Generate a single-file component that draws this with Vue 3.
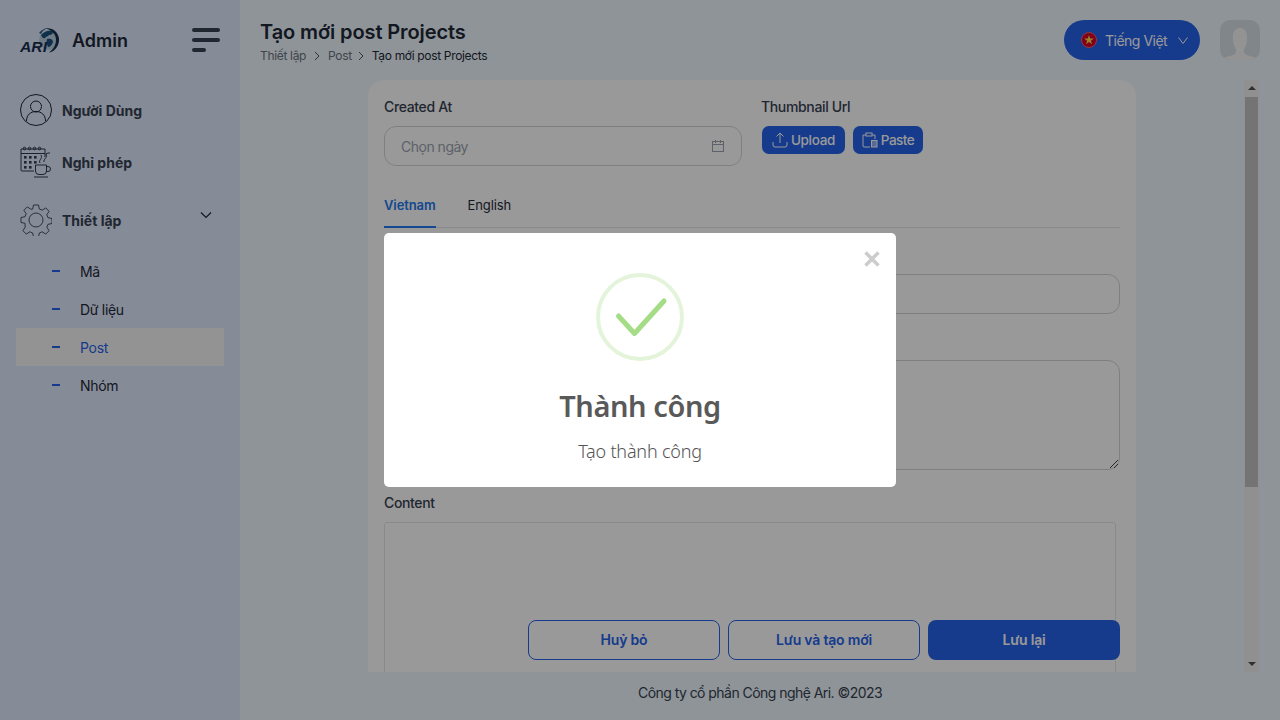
<template>
  <div class="layout">
    <aside class="sidebar">
      <div class="brand">
        <svg class="logo" width="40" height="28" viewBox="0 0 40 28">
          <circle cx="29" cy="14" r="10" fill="#b9cfe0" />
          <path d="M21 9c3-3 7-5 11-4 2 2 0 4-3 4-1 2-3 1-4 3-2 1-3-1-4-3zM27 13c3-1 6 0 6 3-1 3-3 5-5 5-1-3-2-5-1-8z" fill="#1c4f7c" />
          <path d="M26 2.500c6-1 12 3 13 10 .5 7-4 13-10 14 4-3 7-7 7-13 0-5-4-9-10-11z" fill="#16304f" />
          <path d="M19 7c2-3 6-5 9-5-3 1-6 3-7 6z" fill="#2d5f86" />
          <text x="0" y="25.500" textLength="27" lengthAdjust="spacingAndGlyphs" class="logo-text">ARI</text>
        </svg>
        <span class="brand-name">Admin</span>
        <div class="burger">
          <span></span>
          <span></span>
          <span class="short"></span>
        </div>
      </div>

      <nav class="nav">
        <a class="nav-item">
          <svg class="nav-icon" viewBox="0 0 32 32" fill="none" stroke="#1f2937" stroke-width="1">
            <circle cx="16" cy="16" r="15.500" />
            <circle cx="16" cy="12.500" r="5.500" />
            <path d="M6.500 27c0-6 4-9.500 9.500-9.500s9.500 3.500 9.500 9.500" />
          </svg>
          <span>Người Dùng</span>
        </a>
        <a class="nav-item">
          <svg class="nav-icon" viewBox="0 0 32 32" fill="none" stroke="#1f2937" stroke-width=".9">
            <path d="M14 25H2a1 1 0 0 1-1-1V3h24v8" />
            <path d="M1 7.500h24" />
            <circle cx="4.500" cy="2.500" r="1.300" /><circle cx="9.500" cy="2.500" r="1.300" />
            <circle cx="14.500" cy="2.500" r="1.300" /><circle cx="19.500" cy="2.500" r="1.300" />
            <g fill="#374151" stroke="none">
              <rect x="4" y="10" width="2.600" height="2.600" /><rect x="9" y="10" width="2.600" height="2.600" /><rect x="14" y="10" width="2.600" height="2.600" />
              <rect x="4" y="15" width="2.600" height="2.600" /><rect x="9" y="15" width="2.600" height="2.600" /><rect x="14" y="15" width="2.600" height="2.600" />
              <rect x="4" y="20" width="2.600" height="2.600" /><rect x="9" y="20" width="2.600" height="2.600" />
            </g>
            <path d="M15.500 19h11v6a3.500 3.500 0 0 1-3.500 3.500h-4a3.500 3.500 0 0 1-3.500-3.500z" />
            <path d="M26.500 20.500h1.500a2.500 2.500 0 0 1 0 5h-1.800M14 31h14" />
            <path d="M20 17c-2-3 3-4 1-8M24 16c-1-3 4-4 2-8 1-1 3-1 4-1" />
          </svg>
          <span>Nghỉ phép</span>
        </a>
        <a class="nav-item nav-parent">
          <svg class="nav-icon" viewBox="0 0 32 32" fill="none" stroke="#374151" stroke-width=".9">
            <path d="M13.500 1h5l.8 4 2.900 1.200 3.500-2.300 3.400 3.400-2.300 3.500 1.200 2.900 4 .8v5l-4 .8-1.200 2.900 2.300 3.500-3.400 3.400-3.500-2.300-2.900 1.200-.8 4h-5l-.8-4-2.900-1.200-3.500 2.300-3.400-3.400 2.300-3.500L5 19.300l-4-.8v-5l4-.8 1.200-2.900-2.300-3.500 3.400-3.400 3.500 2.300L12.700 5z" stroke-linejoin="round" />
            <circle cx="16" cy="16" r="7" />
          </svg>
          <span>Thiết lập</span>
          <svg class="nav-chevron" width="12" height="8" viewBox="0 0 12 8" fill="none" stroke="#1f2937" stroke-width="1.200">
            <path d="M1 1.500l5 5 5-5" />
          </svg>
        </a>
        <ul class="sub-menu">
          <li v-for="item in subItems" :key="item" class="sub-item" :class="{ active: item === 'Post' }">
            <i class="dash"></i>
            <span>{{ item }}</span>
          </li>
        </ul>
      </nav>
    </aside>

    <div class="main">
      <header class="topbar">
        <div class="heading">
          <h1>Tạo mới post Projects</h1>
          <div class="breadcrumb">
            <span class="muted">Thiết lập</span>
            <svg width="6" height="10" viewBox="0 0 6 10" fill="none" stroke="#4b5563"><path d="M1 1l4 4-4 4" /></svg>
            <span class="muted">Post</span>
            <svg class="tight" width="6" height="10" viewBox="0 0 6 10" fill="none" stroke="#4b5563"><path d="M1 1l4 4-4 4" /></svg>
            <span>Tạo mới post Projects</span>
          </div>
        </div>
        <div class="top-actions">
          <div class="lang">
            <svg width="16" height="16" viewBox="0 0 16 16">
              <circle cx="8" cy="8" r="7.500" fill="#d80027" stroke="#f0607a" />
              <path d="M8 3l1.200 3.500h3.700l-3 2.200 1.200 3.500L8 10l-3.100 2.200 1.200-3.500-3-2.200h3.700z" fill="#ffda44" />
            </svg>
            <span>Tiếng Việt</span>
            <svg class="lang-chevron" width="10" height="7" viewBox="0 0 10 7" fill="none" stroke="#fff" stroke-width="1">
              <path d="M.5 .5l4.500 6 4.500-6" />
            </svg>
          </div>
          <div class="avatar">
            <svg width="40" height="40" viewBox="0 0 40 40">
              <path d="M3 40v-1c3-3 9-3 12-5 2-2 1-5 0-7-2-3-2-7-2-11 0-5 3-8 7-8s7 3 7 8c0 4 0 8-2 11-1 2-2 5 0 7 3 2 9 2 12 5v1z" fill="#f5f5f5" />
            </svg>
          </div>
        </div>
      </header>

      <div class="body">
        <section class="card">
          <div class="row-top">
            <div class="field-date">
              <label>Created At</label>
              <div class="date-input">
                <span>Chọn ngày</span>
                <svg width="14" height="14" viewBox="0 0 14 14" fill="none" stroke="#9ca3af">
                  <rect x="1.500" y="2.500" width="11" height="10" />
                  <path d="M1.500 5.500h11M4.500 1v3M9.500 1v3" />
                </svg>
              </div>
            </div>
            <div class="field-thumb">
              <label>Thumbnail Url</label>
              <div class="thumb-btns">
                <button class="small-btn btn-upload">
                  <svg width="16" height="16" viewBox="0 0 16 16" fill="none" stroke="#fff">
                    <path d="M8 11V1.500M4.500 4.500L8 1l3.500 3.500M1 10v3a2 2 0 0 0 2 2h10a2 2 0 0 0 2-2v-3" />
                  </svg>
                  Upload
                </button>
                <button class="small-btn btn-paste">
                  <svg width="16" height="16" viewBox="0 0 16 16" fill="none" stroke="#fff">
                    <path d="M8 15H2a1 1 0 0 1-1-1V3h3M10 3h3v4" />
                    <rect x="4" y="1" width="6" height="3" />
                    <rect x="9.500" y="8.500" width="5.500" height="6.500" fill="#fff" fill-opacity=".5" />
                  </svg>
                  Paste
                </button>
              </div>
            </div>
          </div>

          <div class="tabs">
            <span class="tab active">Vietnam</span>
            <span class="tab">English</span>
          </div>

          <label class="field-label">Title</label>
          <div class="text-input"></div>
          <label class="field-label">Description</label>
          <div class="text-area">
            <svg class="resizer" width="9" height="9" viewBox="0 0 9 9" stroke="#444">
              <path d="M1 9l8-8M5 9l4-4" />
            </svg>
          </div>
          <label class="field-label content-label">Content</label>
          <div class="editor"></div>

          <div class="actions">
            <button class="btn outline">Huỷ bỏ</button>
            <button class="btn outline">Lưu và tạo mới</button>
            <button class="btn solid">Lưu lại</button>
          </div>
        </section>

        <div class="scrollbar">
          <i class="arrow up"></i>
          <div class="thumb"></div>
          <i class="arrow down"></i>
        </div>
      </div>

      <footer class="footer">Công ty cổ phần Công nghệ Ari. ©2023</footer>
    </div>

    <div class="overlay">
      <div class="modal">
        <svg class="close" width="16" height="16" viewBox="0 0 16 16" stroke="#ccc" stroke-width="3.500">
          <path d="M1.500 1.500l13 13M14.500 1.500l-13 13" />
        </svg>
        <svg class="success" width="88" height="88" viewBox="0 0 88 88" fill="none">
          <circle cx="44" cy="44" r="42" stroke="#a5dc86" stroke-opacity=".3" stroke-width="4" />
          <path d="M22.500 43l16 17.500L68 28" stroke="#a5dc86" stroke-width="5" stroke-linecap="round" stroke-linejoin="round" />
        </svg>
        <h2>Thành công</h2>
        <p>Tạo thành công</p>
      </div>
    </div>
  </div>
</template>

<script setup>
const subItems = ['Mã', 'Dữ liệu', 'Post', 'Nhóm']
</script>

<style>
html,
body {
  margin: 0;
  overflow: hidden;
}
</style>

<style scoped>
.layout {
  display: flex;
  height: 720px;
  font-family: Inter, "Noto Sans", sans-serif;
  color: #1f2937;
  background: #eef7fd;
}

.sidebar {
  width: 240px;
  flex: none;
  background: #dee8fc;
}

.brand {
  display: flex;
  align-items: center;
  height: 80px;
  padding: 0 20px;
  box-sizing: border-box;
}

.logo {
  flex: none;
}

.logo-text {
  font: italic 700 15px "Liberation Sans", sans-serif;
  fill: #16304f;
}

.brand-name {
  margin-left: 12px;
  font-size: 18px;
  font-weight: 600;
}

.burger {
  display: flex;
  flex-direction: column;
  gap: 6px;
  width: 28px;
  margin-left: auto;
}

.burger span {
  height: 4px;
  border-radius: 2px;
  background: #374151;
}

.burger .short {
  width: 14px;
}

.nav {
  padding-top: 4px;
}

.nav-item {
  display: flex;
  align-items: center;
  gap: 10px;
  height: 52px;
  padding: 0 28px 0 20px;
  font-size: 14px;
  font-weight: 700;
  color: #374151;
}

.nav-parent {
  margin-top: 6px;
}

.nav-icon {
  width: 32px;
  height: 32px;
  flex: none;
}

.nav-chevron {
  margin: 0 0 10px auto;
}

.sub-menu {
  list-style: none;
  margin: 6px 0 0;
  padding: 0 16px;
}

.sub-item {
  display: flex;
  align-items: center;
  height: 38px;
  padding-left: 36px;
  font-size: 14px;
  letter-spacing: -0.3px;
}

.sub-item.active {
  background: #f6f6f6;
  color: #2563eb;
}

.dash {
  width: 8px;
  height: 2px;
  margin-right: 20px;
  background: #2563eb;
}

.main {
  flex: 1;
  min-width: 0;
  display: flex;
  flex-direction: column;
}

.topbar {
  display: flex;
  align-items: center;
  justify-content: space-between;
  height: 80px;
  padding: 0 20px;
  box-sizing: border-box;
  flex: none;
}

.heading {
  padding-top: 4px;
}

h1 {
  margin: 0;
  font-size: 20px;
  line-height: 24px;
  font-weight: 600;
  letter-spacing: -0.1px;
}

.breadcrumb {
  display: flex;
  align-items: center;
  gap: 8px;
  margin-top: 4px;
  font-size: 12px;
  line-height: 16px;
  letter-spacing: -0.33px;
}

.breadcrumb .tight {
  margin-left: -2px;
}

.muted {
  color: #6b7280;
}

.top-actions {
  display: flex;
  align-items: center;
  gap: 20px;
}

.lang {
  display: flex;
  align-items: center;
  gap: 8px;
  width: 136px;
  height: 40px;
  padding-left: 17px;
  box-sizing: border-box;
  border-radius: 20px;
  background: #2563eb;
  color: #fff;
  font-size: 14px;
  letter-spacing: -0.5px;
}

.lang-chevron {
  margin-left: 3px;
}

.avatar {
  width: 40px;
  height: 40px;
  border-radius: 10px;
  overflow: hidden;
  background: #d8dfe6;
}

.body {
  flex: 1;
  min-height: 0;
  display: flex;
  padding-left: 128px;
  gap: 108px;
}

.card {
  width: 768px;
  flex: none;
  padding: 16px;
  box-sizing: border-box;
  border-radius: 16px 16px 0 0;
  background: #fff;
  overflow: hidden;
  position: relative;
}

.row-top {
  display: flex;
  gap: 19px;
}

label {
  display: block;
  font-size: 14px;
  line-height: 22px;
  font-weight: 500;
  letter-spacing: -0.35px;
  color: #374151;
}

.field-date label,
.field-thumb label {
  margin-bottom: 8px;
}

.date-input {
  display: flex;
  align-items: center;
  justify-content: space-between;
  width: 358px;
  height: 40px;
  padding: 0 16px;
  box-sizing: border-box;
  border: 1px solid #d1d5db;
  border-radius: 12px;
  font-size: 14px;
  letter-spacing: -0.5px;
  color: #9ca3af;
}

.thumb-btns {
  display: flex;
  gap: 8px;
  padding-left: 1px;
}

.small-btn {
  display: flex;
  align-items: center;
  justify-content: center;
  gap: 3px;
  height: 28px;
  padding: 0;
  border: 0;
  border-radius: 7px;
  background: #2563eb;
  color: #fff;
  font: 500 13.500px Inter, sans-serif;
  letter-spacing: -0.3px;
}

.btn-upload {
  width: 83px;
}

.btn-paste {
  width: 70px;
  letter-spacing: -0.5px;
}

.tabs {
  display: flex;
  gap: 32px;
  height: 44px;
  margin-top: 17px;
  border-bottom: 1px solid #e5e7eb;
  font-size: 13px;
}

.tab {
  height: 43px;
  line-height: 44px;
  letter-spacing: -0.1px;
}

.tab.active {
  color: #2279f0;
  font-weight: 600;
  border-bottom: 2px solid #2279f0;
}

.field-label {
  margin-top: 12px;
  margin-bottom: 12px;
}

.text-input {
  height: 40px;
  box-sizing: border-box;
  border: 1px solid #d1d5db;
  border-radius: 12px;
}

.text-area {
  position: relative;
  height: 110px;
  box-sizing: border-box;
  border: 1px solid #d1d5db;
  border-radius: 12px;
}

.resizer {
  position: absolute;
  right: 1px;
  bottom: 1px;
}

.content-label {
  margin-top: 22px;
  margin-bottom: 8px;
}

.editor {
  width: 732px;
  height: 160px;
  box-sizing: border-box;
  border: 1px solid #e5e7eb;
  border-radius: 3px;
}

.actions {
  position: absolute;
  right: 16px;
  top: 540px;
  display: flex;
  gap: 8px;
}

.btn {
  width: 192px;
  height: 40px;
  padding: 0 0 2px;
  box-sizing: border-box;
  border-radius: 8px;
  font: 600 14px Inter, sans-serif;
  letter-spacing: -0.2px;
}

.btn.outline {
  border: 1px solid #2563eb;
  background: #fff;
  color: #2563eb;
}

.btn.solid {
  border: 0;
  background: #2563eb;
  color: #fff;
}

.scrollbar {
  width: 15px;
  flex: none;
  display: flex;
  flex-direction: column;
  align-items: center;
  background: #f1f1f1;
}

.thumb {
  width: 13px;
  height: 390px;
  background: #c1c1c1;
}

.arrow {
  width: 0;
  height: 0;
  border-left: 4px solid transparent;
  border-right: 4px solid transparent;
}

.arrow.up {
  margin: 6px 0 7px;
  border-bottom: 4px solid #505050;
}

.arrow.down {
  margin-top: auto;
  margin-bottom: 6px;
  border-top: 4px solid #505050;
}

.footer {
  height: 48px;
  flex: none;
  line-height: 41px;
  text-align: center;
  font-size: 14px;
  letter-spacing: -0.55px;
  color: #374151;
}

.overlay {
  position: fixed;
  inset: 0;
  display: flex;
  align-items: center;
  justify-content: center;
  background: rgba(0, 0, 0, 0.4);
  font-family: "Noto Sans", sans-serif;
}

.modal {
  position: relative;
  display: flex;
  flex-direction: column;
  align-items: center;
  width: 512px;
  height: 254px;
  padding-top: 40px;
  box-sizing: border-box;
  border-radius: 5px;
  background: #fff;
}

.close {
  position: absolute;
  top: 18px;
  right: 16px;
}

.modal h2 {
  margin: 23px 0 0;
  font-size: 29px;
  line-height: 44px;
  font-weight: 600;
  letter-spacing: -0.4px;
  color: #595959;
}

.modal p {
  margin: 10px 0 0;
  font-size: 18px;
  line-height: 26px;
  font-weight: 300;
  letter-spacing: -0.2px;
  color: #545454;
}
</style>
